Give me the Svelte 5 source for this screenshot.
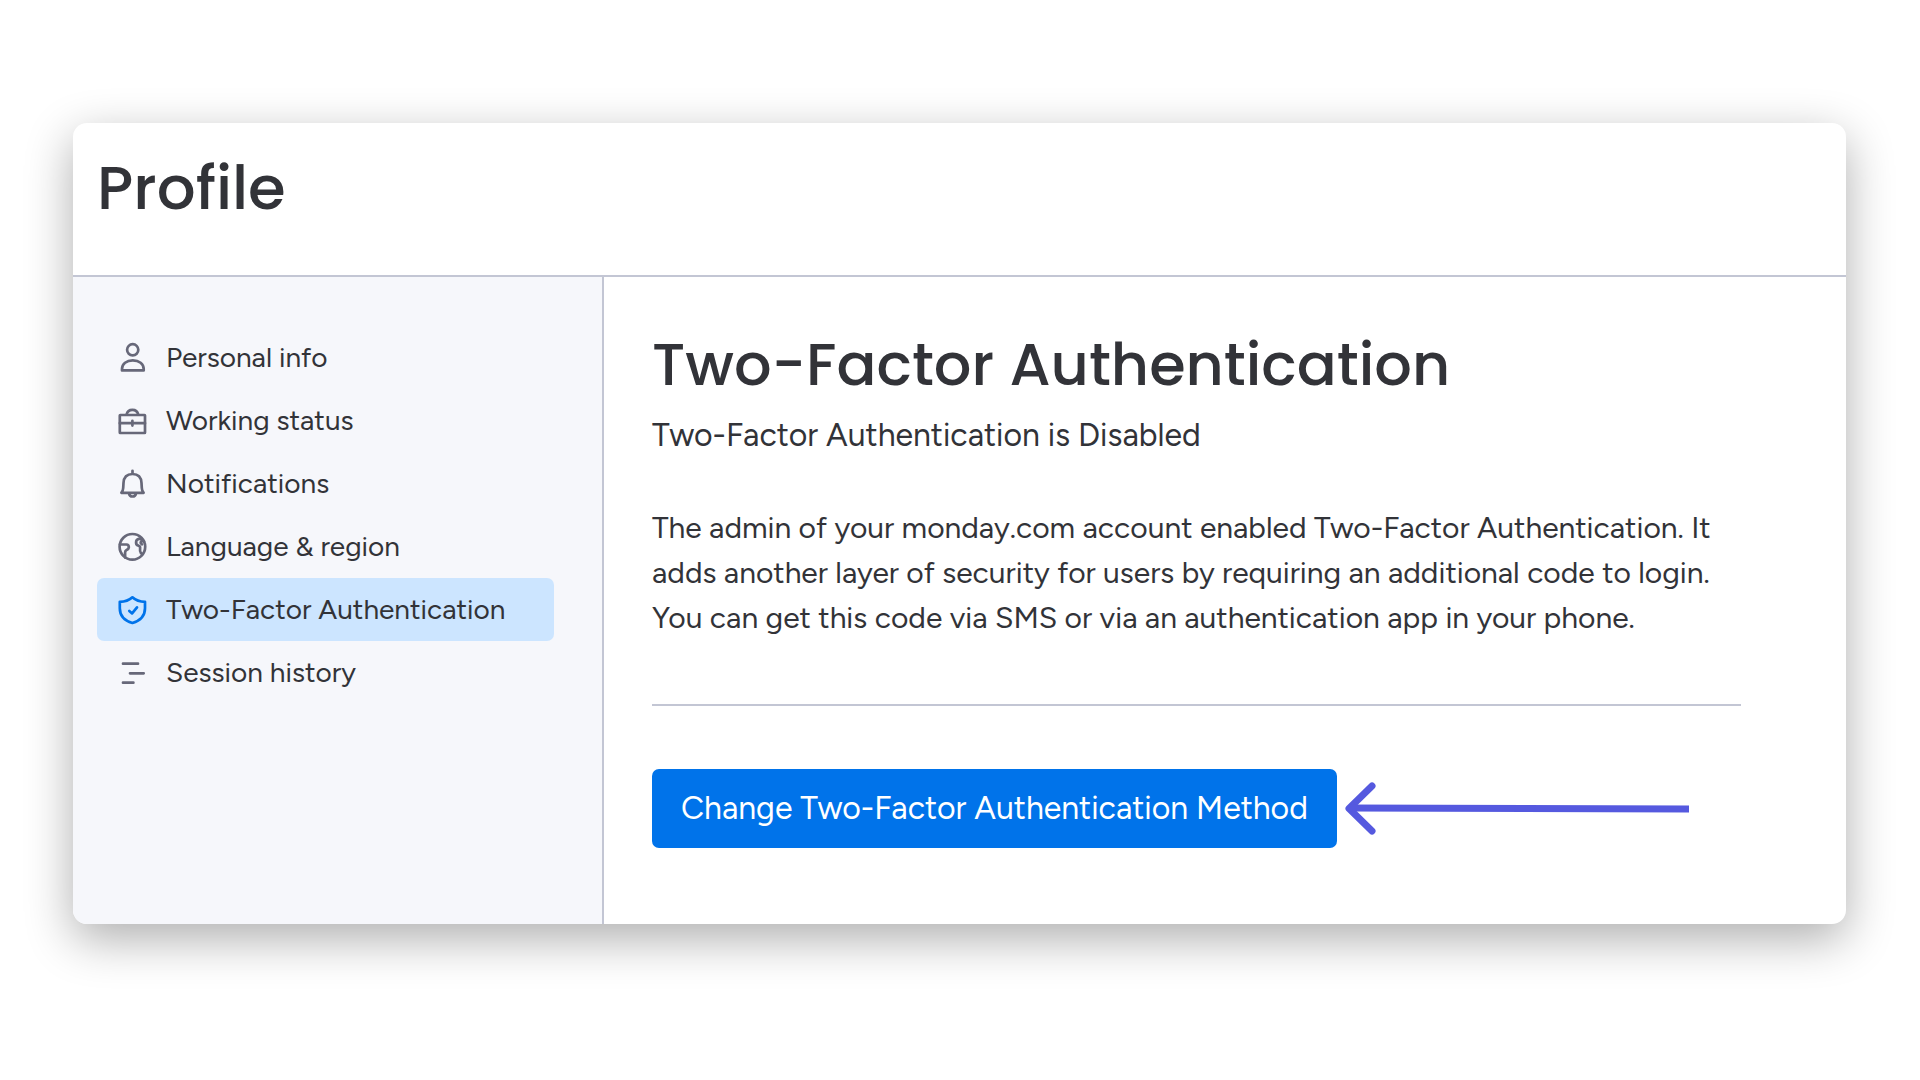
<script>
  const items = [
    { id: 'person', label: 'Personal info' },
    { id: 'case', label: 'Working status' },
    { id: 'bell', label: 'Notifications' },
    { id: 'globe', label: 'Language & region' },
    { id: 'shield', label: 'Two-Factor Authentication' },
    { id: 'list', label: 'Session history' }
  ];
  let selected = $state('shield');
</script>

<div class="page">
  <div class="card">
    <header>
      <h1>Profile</h1>
    </header>
    <div class="body">
      <nav aria-label="Profile sections">
        {#each items as item (item.id)}
          <a
            href={'#' + item.id}
            class:active={selected === item.id}
            aria-current={selected === item.id ? 'page' : undefined}
            onclick={() => (selected = item.id)}
          >
            <svg viewBox="0 0 32 32" aria-hidden="true">
              {#if item.id === 'person'}
                <circle cx="16.7" cy="7.8" r="5.6" />
                <path d="M6 28.400v-1.400C6 21.800 10.500 18.400 16.800 18.400s10.900 3.400 10.900 8.600v1.400z" />
              {:else if item.id === 'case'}
                <rect x="3.8" y="10" width="25.200" height="18" rx="0.5" />
                <path d="M3.800 18.200h25.200M16.400 15.800v4.800M10.600 9.600C11.200 6.600 13.200 4.900 16.400 4.900s5.200 1.700 5.800 4.700" />
              {:else if item.id === 'bell'}
                <path d="M5.400 24.800h22.200c-1.200-1.200-1.700-2.500-1.800-4.800l-.3-5C25.200 9.300 21.800 6 16.500 6S7.800 9.300 7.500 15l-.3 5c-.1 2.300-.6 3.600-1.800 4.800zM16.500 6V2.800M13 25.500c.3 1.900 1.600 3 3.500 3s3.200-1.100 3.500-3" />
              {:else if item.id === 'globe'}
                <circle cx="16.400" cy="15.800" r="12.800" />
                <path d="M4 13.500h6.500c1.600 0 2.500 1.200 2.300 3-.2 1.500-1 2-2.200 2.500-1.200.6-1.500 1.300-1.500 2.600v5M25.500 7.600c-2.700-.2-4.800.7-5.300 2.600-.5 2.200.4 3.900 2.400 4.500 1.300.4 1.700 1.200 1.500 2.500-.3 2 0 3.600.8 4.800l1.100 1M28 10.500c-1.500-.7-2.900-.5-3.200.5-.3.900.2 1.700 1.200 2.300" />
              {:else if item.id === 'shield'}
                <path d="M16.400 3.300c-3.200 3-7.300 4.500-12.600 4.500v6.500C3.800 22 8.500 26.700 16.400 29c7.900-2.300 12.600-7 12.600-14.700V7.800c-5.300 0-9.400-1.500-12.600-4.500zM13.300 17l2.800 2.400 4.900-6" />
              {:else}
                <path d="M7 6.700h15M14 16.300h13.700M7 25.700h10.400" />
              {/if}
            </svg>
            <span>{item.label}</span>
          </a>
        {/each}
      </nav>
      <main>
        <h2>Two-Factor Authentication</h2>
        <p class="status">Two-Factor Authentication is Disabled</p>
        <p class="about">
          The admin of your monday.com account enabled Two-Factor Authentication. It adds another
          layer of security for users by requiring an additional code to login. You can get this
          code via SMS or via an authentication app in your phone.
        </p>
        <hr />
        <div class="action">
          <button type="button">Change Two-Factor Authentication Method</button>
          <svg class="arrow" viewBox="0 0 344 54" aria-hidden="true">
            <path d="M27 4 4 26.500l23 22.500" stroke-linecap="round" stroke-linejoin="round" />
            <path d="M4 26l340 1" />
          </svg>
        </div>
      </main>
    </div>
  </div>
</div>

<style>
  :global(body) {
    margin: 0;
    background: #fff;
  }
  .page {
    box-sizing: border-box;
    min-height: 100vh;
    padding: 123px 74px 156px 73px;
    display: flex;
    font-family: Figtree, Inter, 'Liberation Sans', sans-serif;
    color: #323338;
  }
  .card {
    flex: 1;
    display: flex;
    flex-direction: column;
    border-radius: 14px;
    overflow: hidden;
    background: #fff;
    box-shadow: 0 15px 48px rgba(0, 0, 0, 0.32);
  }
  header {
    padding: 25px 24px 47px;
    border-bottom: 2px solid #c3c6d4;
  }
  h1,
  h2 {
    margin: 0;
    font-family: Poppins, Inter, 'Liberation Sans', sans-serif;
    font-weight: 500;
    line-height: 80px;
  }
  h1 {
    font-size: 61px;
  }
  h2 {
    font-size: 59px;
  }
  .body {
    flex: 1;
    display: flex;
  }
  nav {
    box-sizing: border-box;
    flex: 0 0 531px;
    padding: 49px 48px 48px 24px;
    display: flex;
    flex-direction: column;
    background: #f6f7fb;
    border-right: 2px solid #c3c6d4;
  }
  nav a {
    display: flex;
    align-items: center;
    gap: 18px;
    padding: 0 19px;
    border-radius: 7px;
    font-size: 28px;
    line-height: 63px;
    color: #323338;
    text-decoration: none;
    white-space: nowrap;
  }
  nav a.active {
    background: #cce5ff;
  }
  nav svg {
    width: 32px;
    height: 32px;
    flex: none;
    fill: none;
    stroke: #676879;
    stroke-width: 2.7;
    stroke-linecap: round;
    stroke-linejoin: round;
  }
  nav .active svg {
    stroke: #0073ea;
  }
  main {
    flex: 1;
    padding: 48px 105px 48px 48px;
  }
  p {
    margin: 0;
  }
  .status {
    font-size: 32px;
    line-height: 44px;
    padding: 8px 0;
  }
  .about {
    margin-top: 40px;
    font-size: 30px;
    line-height: 45px;
  }
  hr {
    margin: 64px 0 63px;
    border: 0;
    border-top: 2px solid #c3c6d4;
  }
  .action {
    display: flex;
    align-items: center;
    gap: 8px;
  }
  button {
    padding: 0 29px;
    border: 0;
    border-radius: 7px;
    background: #0073ea;
    color: #fff;
    font-family: inherit;
    font-size: 32px;
    line-height: 79px;
    white-space: nowrap;
  }
  .arrow {
    width: 344px;
    height: 54px;
    fill: none;
    stroke: #5559df;
    stroke-width: 7;
  }
</style>
